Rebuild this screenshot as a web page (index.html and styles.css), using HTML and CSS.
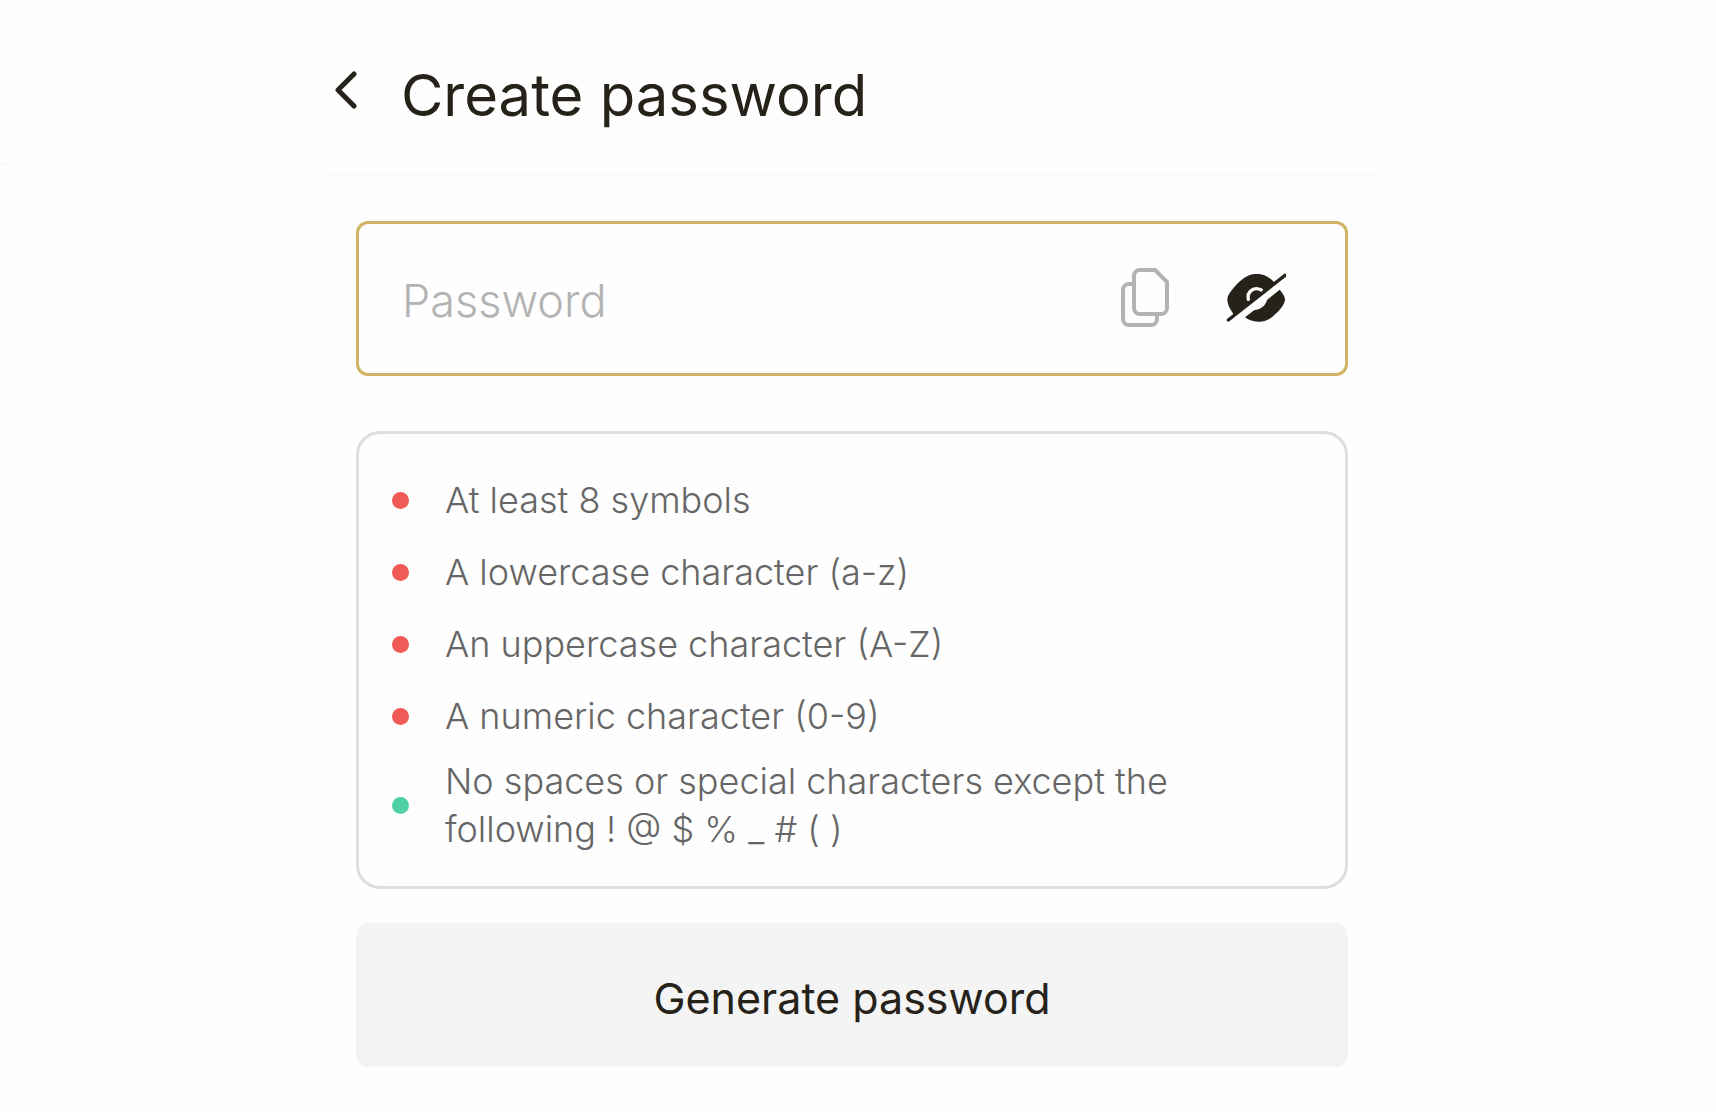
FILE: index.html
```html
<!DOCTYPE html>
<html lang="en">
<head>
<meta charset="utf-8">
<title>Create password</title>
<link rel="stylesheet" href="styles.css">
</head>
<body class="page">
<div class="side-rule"></div>
<main class="panel">
  <header class="header">
    <button class="icon-button" type="button" aria-label="Back">
      <svg width="24" height="40" viewBox="0 0 24 40" fill="none" stroke="currentColor" stroke-width="5" stroke-linecap="round" stroke-linejoin="round"><path d="M21 4 5 20l16 16"/></svg>
    </button>
    <h1 class="title">Create password</h1>
  </header>
  <form class="form">
    <div class="field">
      <input class="field-input" type="password" placeholder="Password" aria-label="Password">
      <button class="icon-button icon-muted" type="button" aria-label="Copy password">
        <svg width="50" height="60" viewBox="0 0 50 60" fill="none" stroke="currentColor" stroke-width="4" stroke-linejoin="round"><path d="M14 16H9a6 6 0 0 0-6 6v29a6 6 0 0 0 6 6h22a6 6 0 0 0 6-6v-5"/><path d="M20 2h15l12 12v26a6 6 0 0 1-6 6H20a6 6 0 0 1-6-6V8a6 6 0 0 1 6-6z"/></svg>
      </button>
      <button class="icon-button" type="button" aria-label="Show password">
        <svg width="60" height="52" viewBox="0 0 180 156" fill="none" stroke-linecap="round">
          <path fill="currentColor" d="M24 130C15 112 4 102 4 80 5 66 30 38 42 28 56 14 74 6 90 6c22 0 36 6 54 24v6z"/>
          <path fill="currentColor" d="M57 136 84 115C104 112 118 102 123 84L161 53C172 66 178 76 177 84 174 100 160 116 148 126 132 144 112 150 96 149 80 149 66 143 57 136z"/>
          <path stroke="#fefefe" stroke-width="10" d="M67 82C62 60 84 42 106 54"/>
          <path stroke="currentColor" stroke-width="10" d="M7 144 177 10"/>
        </svg>
      </button>
    </div>
    <ul class="rules">
      <li class="rule">At least 8 symbols</li>
      <li class="rule">A lowercase character (a-z)</li>
      <li class="rule">An uppercase character (A-Z)</li>
      <li class="rule">A numeric character (0-9)</li>
      <li class="rule rule-met">No spaces or special characters except the following ! @ $ % _ # ( )</li>
    </ul>
    <button class="generate" type="button">Generate password</button>
  </form>
</main>
</body>
</html>
```

FILE: styles.css
```css
* { box-sizing: border-box; }

.page {
  margin: 0;
  padding-right: 14px;
  display: grid;
  grid-template-columns: 1fr minmax(0, 1052px) 1fr;
  background: #fefefe;
  color: #26221a;
  font-family: Inter, "Liberation Sans", sans-serif;
}

.side-rule {
  width: 13px;
  height: 3px;
  margin-top: 162px;
  background: #fafafa;
}

.header {
  display: flex;
  align-items: center;
  gap: 44px;
  height: 177px;
  padding: 6px 8px 0;
  border-bottom: 3px solid #fafafa;
}

.title {
  margin: 0;
  padding-top: 10px;
  font-size: 58px;
  line-height: 72px;
  font-weight: 400;
}

.icon-button {
  display: flex;
  padding: 0;
  border: 0;
  background: none;
  color: inherit;
}

.icon-muted { color: #b3b3b3; }

.form {
  display: flex;
  flex-direction: column;
  padding: 44px 29px 44px 31px;
}

.field {
  display: flex;
  align-items: center;
  gap: 56px;
  height: 155px;
  padding: 0 59px 2px 43px;
  border: 3px solid #d0b465;
  border-radius: 12px;
}

.field-input {
  flex: 1;
  min-width: 0;
  padding: 6px 0 0;
  border: 0;
  outline: 0;
  background: none;
  color: inherit;
  font: 300 45px/60px Inter, "Liberation Sans", sans-serif;
}

.field-input::placeholder { color: #b3b3b3; opacity: 1; }

.rules {
  display: flex;
  flex-direction: column;
  gap: 10px;
  margin: 55px 0 34px;
  padding: 35px 33px 33px;
  border: 3px solid #dedede;
  border-radius: 24px;
  list-style: none;
  color: #666;
  font-size: 36px;
  line-height: 48px;
  font-weight: 300;
}

.rule {
  display: flex;
  align-items: center;
  gap: 36px;
  min-height: 62px;
}

.rule::before {
  content: "";
  flex: none;
  width: 17px;
  height: 17px;
  border-radius: 50%;
  background: #ee5a55;
}

.rule-met::before { background: #4fcfa5; }

.generate {
  height: 144px;
  padding: 6px 0 0;
  border: 0;
  border-radius: 12px;
  background: #f4f4f4;
  color: inherit;
  font: 400 43px/56px Inter, "Liberation Sans", sans-serif;
}
```
